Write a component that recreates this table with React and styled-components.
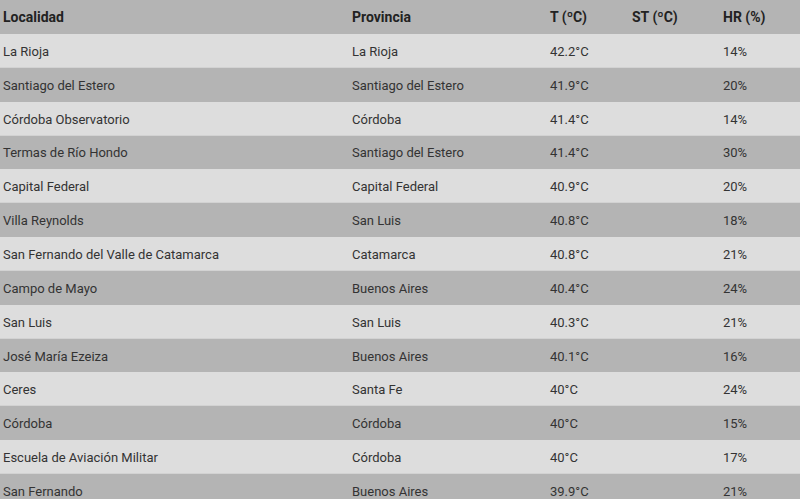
import React from 'react'
import styled, { createGlobalStyle } from 'styled-components'

const GlobalStyle = createGlobalStyle`
    body {
        margin: 0;
        background: #ffffff;
        font-family: Roboto, "Liberation Sans", sans-serif;
    }
`

const rows = [
    ['La Rioja', 'La Rioja', '42.2°C', '', '14%'],
    ['Santiago del Estero', 'Santiago del Estero', '41.9°C', '', '20%'],
    ['Córdoba Observatorio', 'Córdoba', '41.4°C', '', '14%'],
    ['Termas de Río Hondo', 'Santiago del Estero', '41.4°C', '', '30%'],
    ['Capital Federal', 'Capital Federal', '40.9°C', '', '20%'],
    ['Villa Reynolds', 'San Luis', '40.8°C', '', '18%'],
    ['San Fernando del Valle de Catamarca', 'Catamarca', '40.8°C', '', '21%'],
    ['Campo de Mayo', 'Buenos Aires', '40.4°C', '', '24%'],
    ['San Luis', 'San Luis', '40.3°C', '', '21%'],
    ['José María Ezeiza', 'Buenos Aires', '40.1°C', '', '16%'],
    ['Ceres', 'Santa Fe', '40°C', '', '24%'],
    ['Córdoba', 'Córdoba', '40°C', '', '15%'],
    ['Escuela de Aviación Militar', 'Córdoba', '40°C', '', '17%'],
    ['San Fernando', 'Buenos Aires', '39.9°C', '', '21%'],
]

const Table = styled.div`
    width: 800px;
    display: flex;
    flex-direction: column;
`

const Row = styled.div`
    display: grid;
    grid-template-columns: 349px 198px 82px 91px 1fr;
    align-items: center;
    height: ${props => props.light !== undefined ? '33.85px' : '34px'};
    box-sizing: border-box;
    padding-left: 3px;
    padding-top: ${props => props.light !== undefined ? '2px' : '0'};
    background: ${props => props.light ? '#dddddd' : '#b4b4b4'};
    border-bottom: 1px solid ${props => props.light ? '#d2d2d2' : '#b4b4b4'};
`

const Head = styled.div`
    font-size: 14px;
    font-weight: 700;
    color: #222222;
    white-space: nowrap;
`

const Cell = styled.div`
    font-size: 13px;
    color: #333333;
    white-space: nowrap;
`

function App() {
    return (
        <>
            <GlobalStyle />
            <Table>
                <Row>
                    <Head>Localidad</Head>
                    <Head>Provincia</Head>
                    <Head>T (ºC)</Head>
                    <Head>ST (ºC)</Head>
                    <Head>HR (%)</Head>
                </Row>
                {rows.map((r, i) => (
                    <Row key={i} light={i % 2 === 0}>
                        {r.map((c, j) => <Cell key={j}>{c}</Cell>)}
                    </Row>
                ))}
            </Table>
        </>
    )
}

export default App
